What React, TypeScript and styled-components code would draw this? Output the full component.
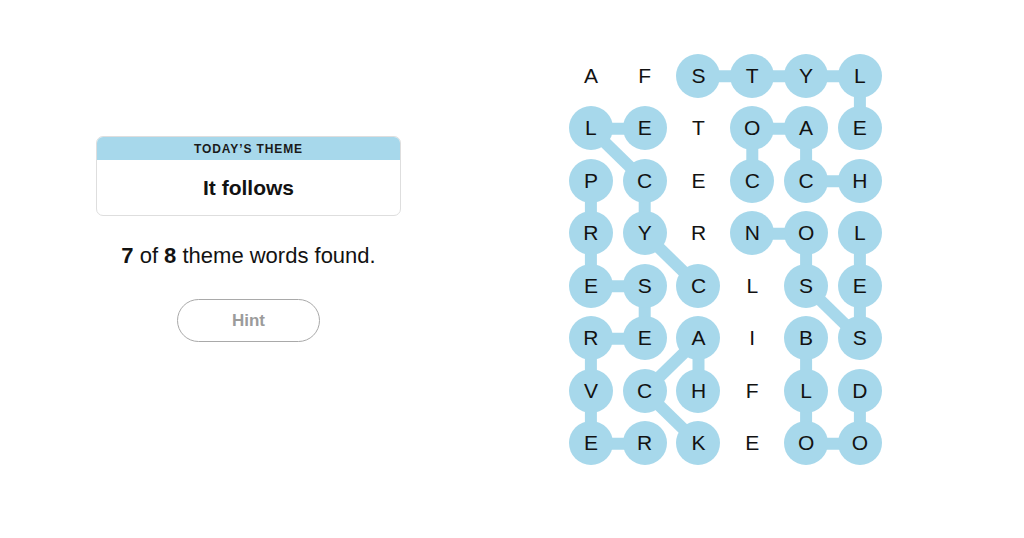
import React from "react";
import styled, { createGlobalStyle } from "styled-components";

const BLUE = "#a7d8eb";
const COL_W = 53.8;
const ROW_H = 52.5;

const GlobalStyle = createGlobalStyle`
  html, body {
    margin: 0;
    padding: 0;
    background: #ffffff;
  }
  body {
    font-family: "Liberation Sans", Arial, sans-serif;
    color: #121212;
  }
`;

const letters = [
  "AFSTYL",
  "LETOAE",
  "PCECCH",
  "RYRNOL",
  "ESCLSE",
  "REAIBS",
  "VCHFLD",
  "ERKEOO"
];

type Cell = [number, number];

const words: Cell[][] = [
  [[0, 2], [0, 3], [0, 4], [0, 5], [1, 5]],
  [[2, 3], [1, 3], [1, 4], [2, 4], [2, 5]],
  [[4, 2], [3, 1], [2, 1], [1, 0], [1, 1]],
  [[2, 0], [3, 0], [4, 0], [4, 1], [5, 1], [5, 0], [6, 0], [7, 0], [7, 1]],
  [[6, 2], [5, 2], [6, 1], [7, 2]],
  [[3, 5], [4, 5], [5, 5], [4, 4], [3, 4], [3, 3]],
  [[5, 4], [6, 4], [7, 4], [7, 5], [6, 5]]
];

const found = new Set<string>();
words.forEach(w => w.forEach(([r, c]) => found.add(`${r}-${c}`)));

const styles = {
  Page: styled.div`
    display: flex;
    align-items: flex-start;
    width: 1024px;
    height: 538px;
    padding-left: 96px;
    box-sizing: border-box;
    overflow: hidden;
  `,
  Side: styled.div`
    display: flex;
    flex-direction: column;
    align-items: center;
    width: 305px;
    margin-top: 136px;
  `,
  ThemeCard: styled.div`
    width: 100%;
    border: 1px solid #dedede;
    border-radius: 7px;
    overflow: hidden;
    box-sizing: border-box;
  `,
  ThemeHeader: styled.div`
    background: ${BLUE};
    height: 23px;
    display: flex;
    align-items: center;
    justify-content: center;
    font-size: 12px;
    font-weight: 700;
    letter-spacing: 0.9px;
    color: #1a1a1a;
  `,
  ThemeBody: styled.div`
    height: 55px;
    display: flex;
    align-items: center;
    justify-content: center;
    font-size: 21px;
    font-weight: 700;
    color: #121212;
  `,
  Progress: styled.p`
    margin: 25px 0 0;
    font-size: 22px;
    line-height: 30px;
    color: #121212;
    b {
      font-weight: 700;
    }
  `,
  HintButton: styled.button`
    margin-top: 28px;
    width: 143px;
    height: 43px;
    border: 1.5px solid #a9a9a9;
    border-radius: 22px;
    background: #ffffff;
    color: #9b9b9b;
    font-family: "Liberation Sans", Arial, sans-serif;
    font-size: 17px;
    font-weight: 700;
    cursor: default;
  `,
  Board: styled.div`
    position: relative;
    margin-left: 163px;
    margin-top: 49.5px;
    display: grid;
    grid-template-columns: repeat(6, ${COL_W}px);
    grid-template-rows: repeat(8, ${ROW_H}px);
  `,
  Lines: styled.svg`
    position: absolute;
    left: 0;
    top: 0;
    z-index: 0;
    pointer-events: none;
  `,
  Letter: styled.div<{ $found: boolean }>`
    position: relative;
    z-index: 1;
    justify-self: center;
    align-self: center;
    width: 44px;
    height: 44px;
    border-radius: 50%;
    background: ${p => (p.$found ? BLUE : "transparent")};
    display: flex;
    align-items: center;
    justify-content: center;
    font-size: 21px;
    color: #121212;
  `
};

const center = ([r, c]: Cell) => ({ x: c * COL_W + COL_W / 2, y: r * ROW_H + ROW_H / 2 });

export default function App() {
  const width = COL_W * 6;
  const height = ROW_H * 8;

  return (
    <>
      <GlobalStyle />
      <styles.Page>
        <styles.Side>
          <styles.ThemeCard>
            <styles.ThemeHeader>TODAY’S THEME</styles.ThemeHeader>
            <styles.ThemeBody>It follows</styles.ThemeBody>
          </styles.ThemeCard>
          <styles.Progress>
            <b>7</b> of <b>8</b> theme words found.
          </styles.Progress>
          <styles.HintButton>Hint</styles.HintButton>
        </styles.Side>
        <styles.Board>
          <styles.Lines width={width} height={height} viewBox={`0 0 ${width} ${height}`}>
            {words.map((w, i) =>
              w.slice(1).map((cell, j) => {
                const a = center(w[j]);
                const b = center(cell);
                return (
                  <line
                    key={`${i}-${j}`}
                    x1={a.x}
                    y1={a.y}
                    x2={b.x}
                    y2={b.y}
                    stroke={BLUE}
                    strokeWidth={12}
                  />
                );
              })
            )}
          </styles.Lines>
          {letters.map((row, r) =>
            row.split("").map((ch, c) => (
              <styles.Letter key={`${r}-${c}`} $found={found.has(`${r}-${c}`)}>
                {ch}
              </styles.Letter>
            ))
          )}
        </styles.Board>
      </styles.Page>
    </>
  );
}
